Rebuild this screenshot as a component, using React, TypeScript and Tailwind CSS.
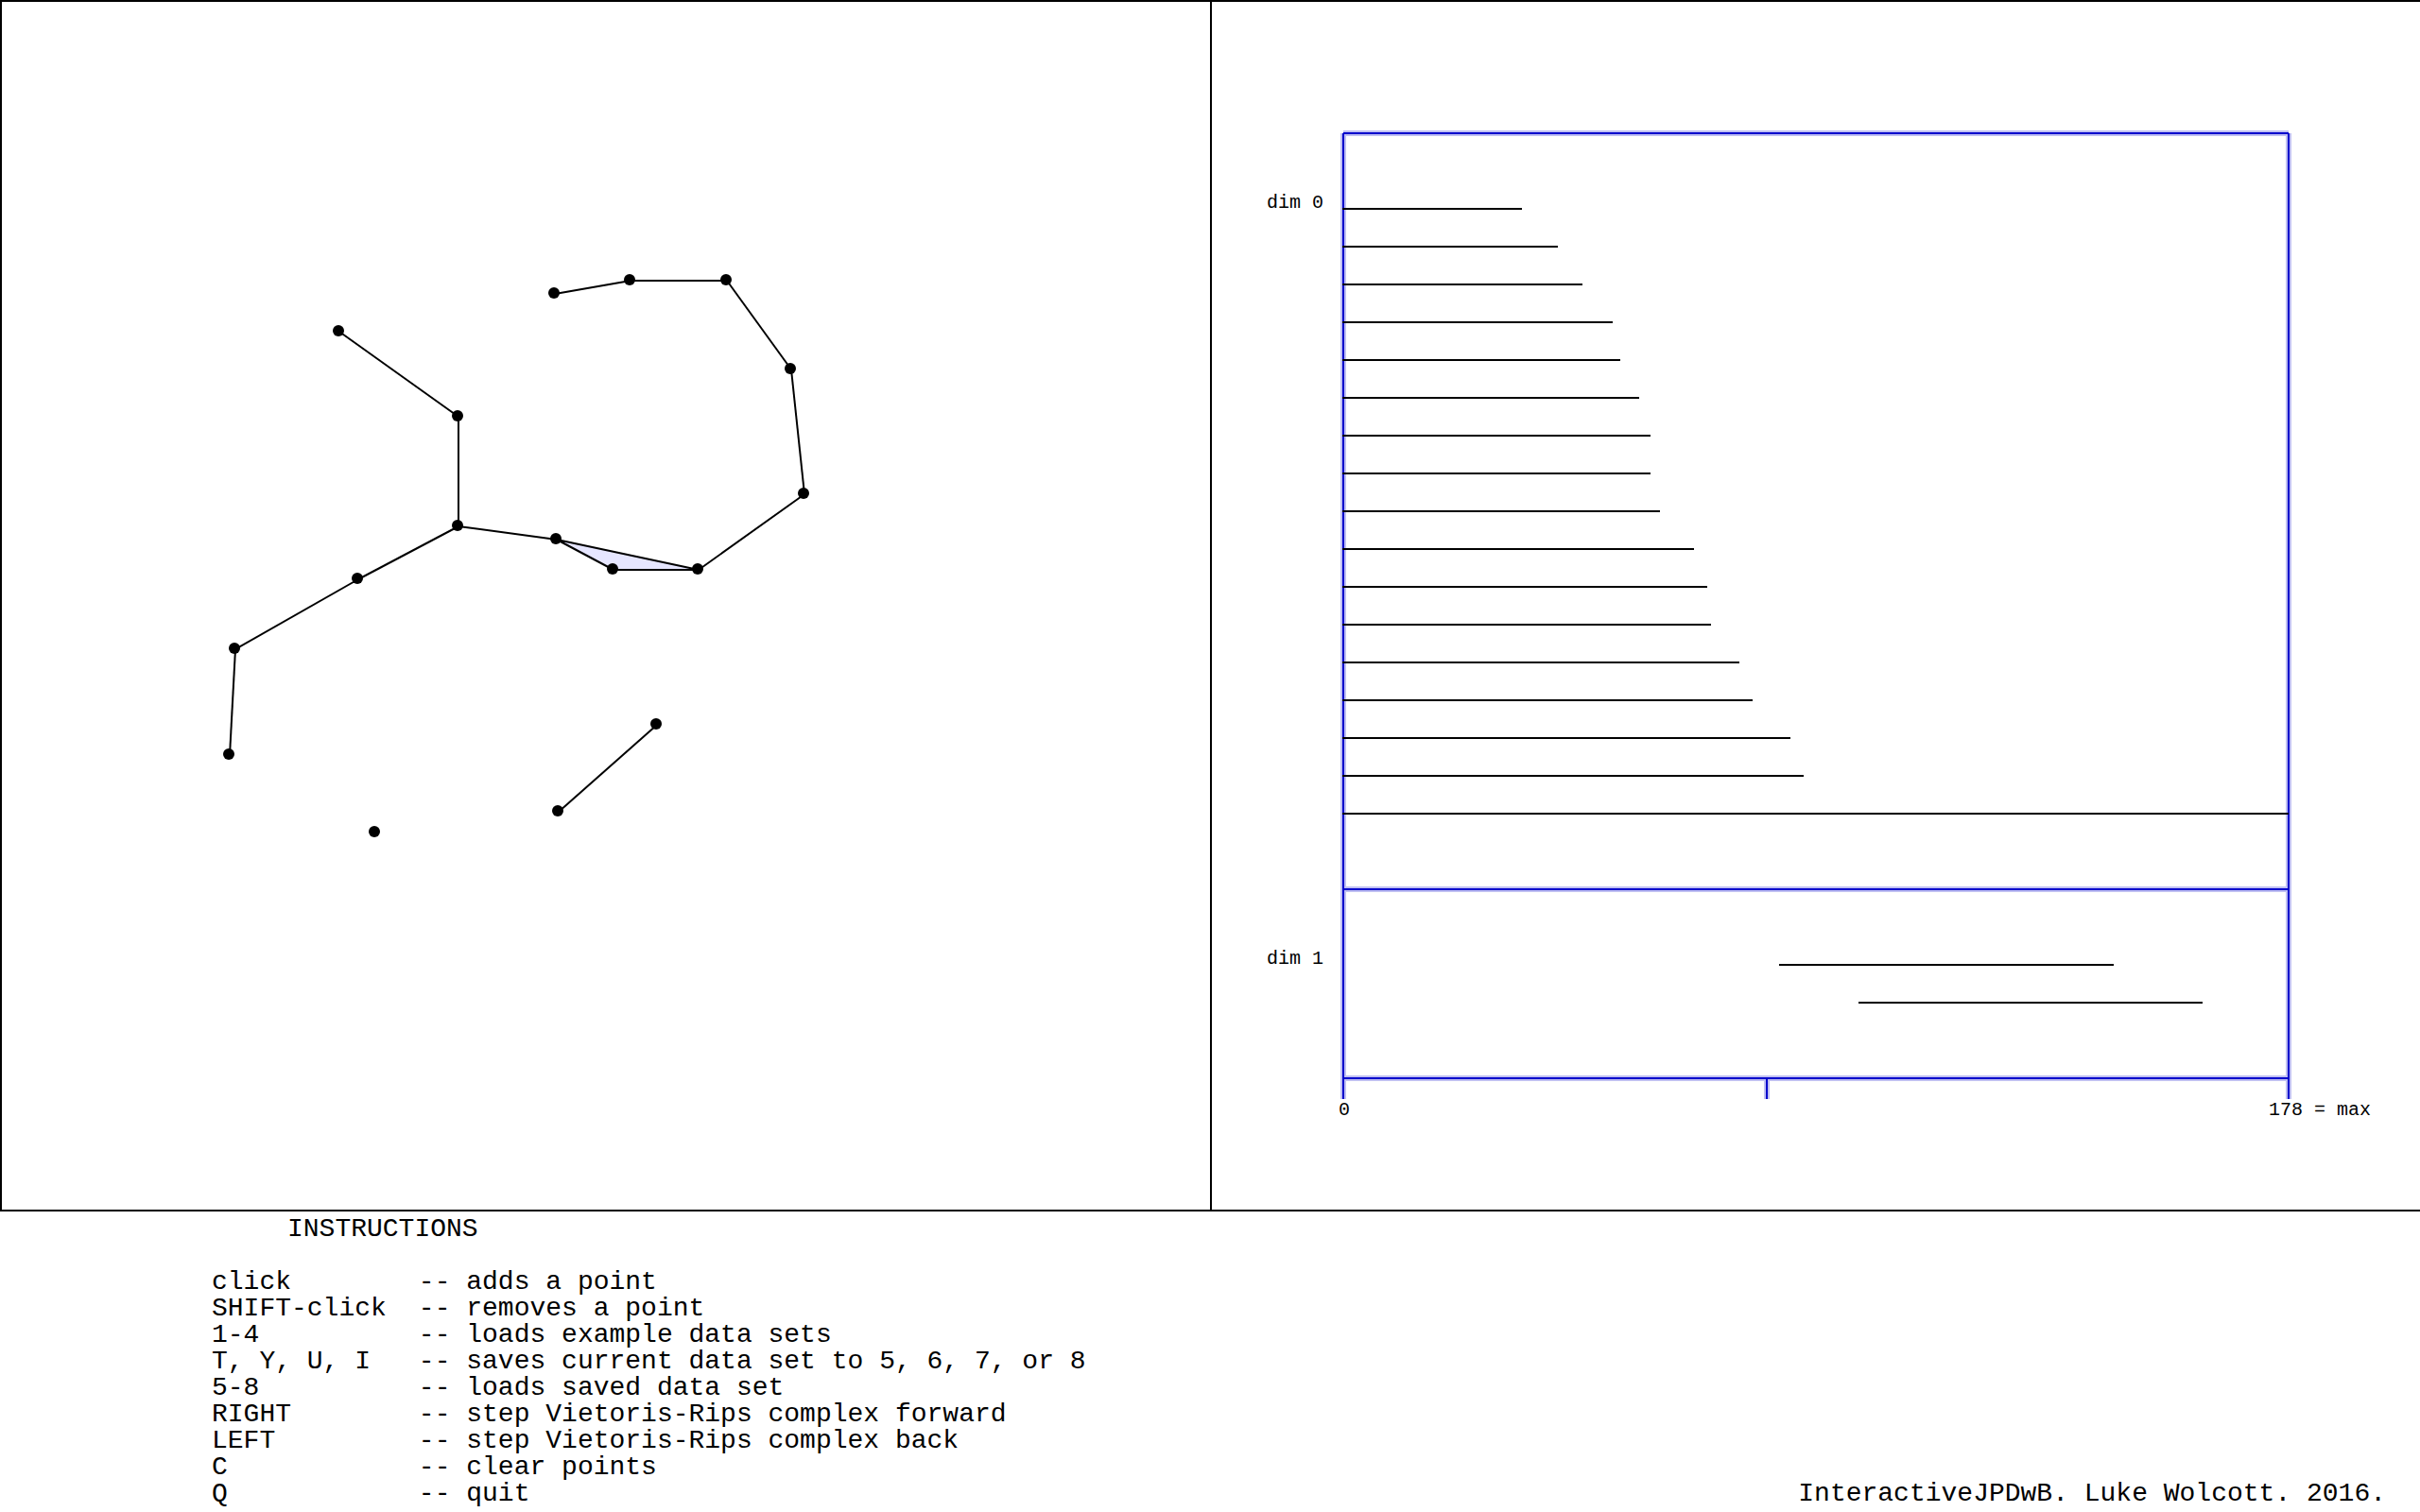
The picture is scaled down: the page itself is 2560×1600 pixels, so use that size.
const POINTS: [number, number][] = [
  [358, 350],
  [484, 440],
  [484, 556],
  [378, 612],
  [248, 686],
  [242, 798],
  [396, 880],
  [588, 570],
  [648, 602],
  [738, 602],
  [850, 522],
  [836, 390],
  [768, 296],
  [666, 296],
  [586, 310],
  [694, 766],
  [590, 858],
];

const EDGES: [number, number][] = [
  [0, 1],
  [1, 2],
  [2, 3],
  [3, 4],
  [4, 5],
  [2, 7],
  [9, 10],
  [10, 11],
  [11, 12],
  [12, 13],
  [13, 14],
  [15, 16],
];

const FACES: [number, number, number][] = [[7, 8, 9]];

const DIM0 = [330, 368, 394, 426, 434, 454, 466, 466, 476, 512, 526, 530, 560, 574, 614, 628, 1141];
const DIM1: [number, number][] = [
  [602, 956],
  [686, 1050],
];

const INSTRUCTIONS: [string, string][] = [
  ['click', 'adds a point'],
  ['SHIFT-click', 'removes a point'],
  ['1-4', 'loads example data sets'],
  ['T, Y, U, I', 'saves current data set to 5, 6, 7, or 8'],
  ['5-8', 'loads saved data set'],
  ['RIGHT', 'step Vietoris-Rips complex forward'],
  ['LEFT', 'step Vietoris-Rips complex back'],
  ['C', 'clear points'],
  ['Q', 'quit'],
];

const FRAME = 'M141 141H1141M141 941H1141M141 1141H1141M141 141V1163M1141 141V1163M589 1141V1163';

function ComplexView() {
  return (
    <svg viewBox="0 0 1280 1280" className="block w-full" role="img" aria-label="Vietoris-Rips complex">
      {FACES.map((face) => (
        <polygon
          key={face.join()}
          points={face.map((i) => `${POINTS[i][0] + 1},${POINTS[i][1] + 1}`).join(' ')}
          fill="#e6e6ff"
          stroke="#000"
          strokeWidth="2"
          strokeLinejoin="round"
        />
      ))}
      {EDGES.map(([a, b]) => (
        <line
          key={`${a}-${b}`}
          x1={POINTS[a][0] + 1}
          y1={POINTS[a][1] + 1}
          x2={POINTS[b][0] + 1}
          y2={POINTS[b][1] + 1}
          stroke="#000"
          strokeWidth="2"
        />
      ))}
      {POINTS.map(([x, y]) => (
        <circle key={`${x}-${y}`} cx={x} cy={y} r="6" />
      ))}
    </svg>
  );
}

function BarcodeView() {
  return (
    <svg viewBox="0 0 1280 1280" className="block w-full" role="img" aria-label="Persistence barcode">
      <path d={FRAME} fill="none" stroke="#bfbff2" strokeWidth="6" />
      <path d={FRAME} fill="none" stroke="#0000cc" strokeWidth="2" />
      {DIM0.map((end, i) => (
        <path key={i} d={`M140 ${221 + i * 40}H${end}`} stroke="#000" strokeWidth="2" />
      ))}
      {DIM1.map(([start, end], i) => (
        <path key={i} d={`M${start} ${1021 + i * 40}H${end}`} stroke="#000" strokeWidth="2" />
      ))}
      <g fontSize="20" fill="#000">
        <text x="60" y="220">dim 0</text>
        <text x="60" y="1020">dim 1</text>
        <text x="136" y="1180">0</text>
        <text x="1120" y="1180">178 = max</text>
      </g>
    </svg>
  );
}

export default function App() {
  return (
    <main className="min-h-screen bg-white font-['Liberation_Mono',monospace] text-black">
      <div className="grid grid-cols-2">
        <div className="relative">
          <ComplexView />
          <div className="pointer-events-none absolute inset-0 border-t-2 border-l-2 border-black" />
        </div>
        <div className="relative">
          <BarcodeView />
          <div className="pointer-events-none absolute inset-0 border-t-2 border-l-2 border-black" />
        </div>
      </div>
      <div className="flex items-end justify-between border-t-2 border-black pt-[5px] pr-9 pl-56 text-[28px] leading-7">
        <section>
          <h1 className="mb-7 pl-20">INSTRUCTIONS</h1>
          <dl className="grid grid-cols-[auto_1fr] gap-x-[34px]">
            {INSTRUCTIONS.map(([key, action]) => (
              <div key={key} className="col-span-2 grid grid-cols-subgrid">
                <dt>{key}</dt>
                <dd>-- {action}</dd>
              </div>
            ))}
          </dl>
        </section>
        <footer>InteractiveJPDwB. Luke Wolcott. 2016.</footer>
      </div>
    </main>
  );
}
